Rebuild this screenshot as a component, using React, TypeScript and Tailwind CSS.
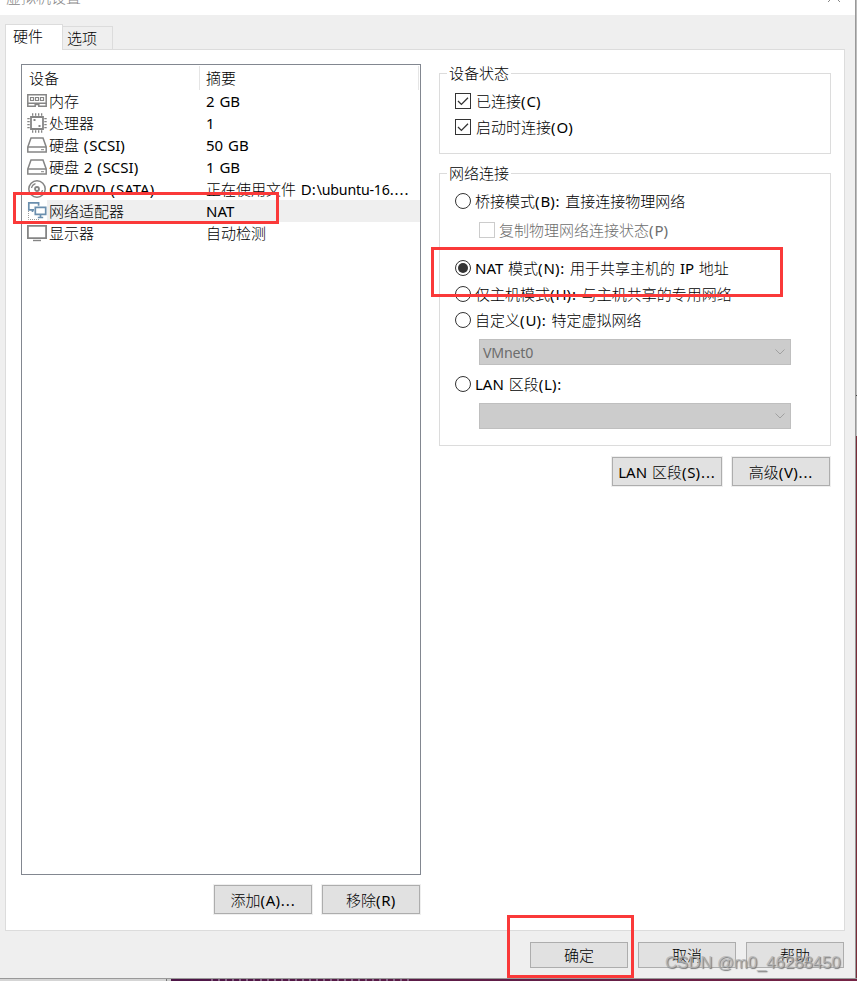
import { Fragment, type ReactNode } from 'react';
import clsx from 'clsx';

type DeviceKind = 'memory' | 'cpu' | 'disk' | 'cd' | 'network' | 'display';

interface Device {
  kind: DeviceKind;
  name: string;
  summary: string;
}

const devices: Device[] = [
  { kind: 'memory', name: '内存', summary: '2 GB' },
  { kind: 'cpu', name: '处理器', summary: '1' },
  { kind: 'disk', name: '硬盘 (SCSI)', summary: '50 GB' },
  { kind: 'disk', name: '硬盘 2 (SCSI)', summary: '1 GB' },
  { kind: 'cd', name: 'CD/DVD (SATA)', summary: '正在使用文件 D:\\ubuntu-16....' },
  { kind: 'network', name: '网络适配器', summary: 'NAT' },
  { kind: 'display', name: '显示器', summary: '自动检测' },
];

// Chinese text is light, Latin runs are regular; punctuation and spaces
// are tracked out, lowercase words are set a bit tighter
const Label = ({ text, className }: { text: string; className?: string }) => (
  <span className={clsx('whitespace-pre', className)}>
    {text.split(/([ ().:]+|[\x21-\x7e]+?(?=[ ().:]|[^\x20-\x7e]|$))/).map((part, i) => {
      if (/^[ ().:]+$/.test(part)) {
        return <span key={i} className="font-normal tracking-[0.9px]">{part}</span>;
      }
      if (i % 2 === 1) {
        return (
          <span key={i} className={clsx('font-normal', /[a-z]/.test(part) && 'text-[14.2px] tracking-[-0.2px]')}>
            {part}
          </span>
        );
      }
      return <Fragment key={i}>{part}</Fragment>;
    })}
  </span>
);

const DeviceIcon = ({ kind }: { kind: DeviceKind }) => (
  <svg width="20" height="22" viewBox="0 0 20 22" fill="none" stroke="#858585" className="shrink-0">
    {kind === 'memory' && (
      <>
        <path d="M.8 4.8h18.4v8.4H.8z" strokeWidth="1.5" />
        <path d="M3.5 7.5h3v3h-3zM8.5 7.5h3v3h-3zM13.5 7.5h3v3h-3z" strokeWidth="1.2" />
        <path d="M.8 13v3.2h7.4v-1.7h3.6v1.7h7.4V13" strokeWidth="1.5" />
      </>
    )}
    {kind === 'cpu' && (
      <>
        <path d="M4 5h12v12H4z" strokeWidth="1.8" />
        <path d="M5 2.5h11M5 19.5h11" strokeWidth="2.4" strokeDasharray="1.3 1.7" />
        <path d="M1.5 6v11M18.5 6v11" strokeWidth="2.4" strokeDasharray="1.3 1.7" />
        <path d="M6.5 8h2M11.5 14h2" strokeWidth="2" />
      </>
    )}
    {kind === 'disk' && (
      <>
        <path d="M.8 13L4 4h12l3.2 9v5H.8z" strokeWidth="1.5" />
        <path d="M1 13h18" strokeWidth="1.5" />
        <path d="M14 15.7h3" />
      </>
    )}
    {kind === 'cd' && (
      <>
        <circle cx="10" cy="11" r="8.2" strokeWidth="1.5" />
        <circle cx="10" cy="11" r="2" strokeWidth="1.8" />
        <path d="M4.5 10a5.6 5.6 0 0 1 4-4.4M15.5 12a5.6 5.6 0 0 1-4 4.4" strokeWidth="1.2" />
      </>
    )}
    {kind === 'network' && (
      <>
        <path d="M7 9.8H1.8V2.8h9.8v3M5.5 10v2" stroke="#6b8fae" strokeWidth="1.7" />
        <path d="M8.3 7.3h10.4v7H8.3z" stroke="#6b8fae" strokeWidth="1.7" />
        <path d="M13.5 14.5v3M10.8 17.5h5.4" stroke="#6b8fae" strokeWidth="1.7" />
        <path d="M1.5 11v8.5h11" stroke="#999" strokeDasharray="1 1" />
      </>
    )}
    {kind === 'display' && (
      <>
        <path d="M.9 3.9h18.2v12.2H.9z" strokeWidth="1.8" />
        <path d="M6 18.5h8" strokeWidth="1.4" />
      </>
    )}
  </svg>
);

const Button = ({ text, className }: { text: string; className?: string }) => (
  <button
    className={clsx(
      'flex items-center justify-center border border-[#adadad] bg-[#e1e1e1] ring-1 ring-[#efefef]',
      className
    )}
  >
    <Label text={text} />
  </button>
);

const Checkbox = ({ text, disabled, className }: { text: string; disabled?: boolean; className?: string }) => (
  <div className={clsx('flex h-4 items-center', disabled ? 'gap-1 text-[#6d6d6d]' : 'gap-[5px]', className)}>
    <span className={clsx('size-4 shrink-0 border bg-white', disabled ? 'border-[#ccc]' : 'border-[#333]')}>
      {!disabled && (
        <svg width="14" height="14" viewBox="0 0 14 14" fill="none" stroke="#333" strokeWidth="1.3">
          <path d="M2 7l3.4 3.4L12 3.8" />
        </svg>
      )}
    </span>
    <Label text={text} />
  </div>
);

const Radio = ({ text, checked, className }: { text: string; checked?: boolean; className?: string }) => (
  <div className={clsx('flex h-4 items-center gap-1', className)}>
    <span className="flex size-4 shrink-0 items-center justify-center rounded-full border border-[#333] bg-white">
      {checked && <span className="size-[10px] rounded-full bg-[#333]" />}
    </span>
    <Label text={text} />
  </div>
);

const Select = ({ value, className }: { value?: string; className?: string }) => (
  <div
    className={clsx(
      'ml-6 flex h-[26px] w-[312px] items-center justify-between border border-[#bfbfbf] bg-[#ccc] pr-[5px] pl-[3px] text-[#6d6d6d]',
      className
    )}
  >
    <Label text={value ?? ''} />
    <svg width="10" height="6" viewBox="0 0 10 6" fill="none" stroke="#a0a0a0">
      <path d="M.5.5L5 5 9.5.5" />
    </svg>
  </div>
);

const Group = ({ title, className, children }: { title: string; className?: string; children: ReactNode }) => (
  <section className={clsx('relative w-[392px] border border-[#dcdcdc] pl-[15px]', className)}>
    <h2 className="absolute -top-3 left-[7px] bg-white px-0.5 leading-[22px] font-light">{title}</h2>
    {children}
  </section>
);

const Highlight = ({ className }: { className: string }) => (
  <div className={clsx('pointer-events-none absolute border-[3px] border-[#fa3939]', className)} />
);

export default function App() {
  return (
    <div className="relative h-[981px] w-[857px] overflow-hidden bg-[#efefef] font-['Noto_Sans','Noto_Sans_CJK_SC',sans-serif] text-[15px] leading-[22px] font-light text-black">
      <div className="flex h-[978px]">
        <div className="flex w-[855px] flex-col">
          {/* Title bar, cut off at the top */}
          <header className="flex h-[15px] items-start justify-between overflow-hidden bg-white pr-[14px] pl-[6px] text-[#888]">
            <span className="-mt-[14px]">虚拟机设置</span>
            <svg width="14" height="14" viewBox="0 0 14 14" fill="none" stroke="#888" className="-mt-[11px]">
              <path d="M1 1l12 12M13 1L1 13" />
            </svg>
          </header>

          {/* Tabs */}
          <nav className="z-10 -mb-px ml-[5px] flex h-[35px] items-end">
            <div className="h-[26px] w-[58px] border border-b-0 border-[#dcdcdc] bg-white pl-[7px] leading-[22px]">硬件</div>
            <div className="h-6 w-[50px] border border-l-0 border-[#dcdcdc] bg-[#efefef] pl-1 leading-[22px]">选项</div>
          </nav>

          <main className="ml-[5px] flex h-[882px] w-[840px] border border-[#dcdcdc] bg-white pt-[14px] pl-[15px]">
            <div className="w-[400px]">
              <div className="h-[811px] border border-[#828790]">
                <div className="flex h-[25px] items-center">
                  <span className="w-[177px] pl-[7px]">设备</span>
                  <span className="flex h-6 w-[220px] items-center border-x border-[#e5e5e5] pl-[6px]">摘要</span>
                </div>
                {devices.map((device) => (
                  <div key={device.name} className="flex h-[22px] items-center pl-[5px]">
                    <DeviceIcon kind={device.kind} />
                    <div className={clsx('flex h-full flex-1 items-center', device.kind === 'network' && 'bg-[#efefef]')}>
                      <Label text={device.name} className="w-[159px] pl-[2px]" />
                      <Label text={device.summary} />
                    </div>
                  </div>
                ))}
              </div>
              <div className="mt-[10px] flex justify-end gap-[10px] pr-px">
                <Button text="添加(A)..." className="h-[29px] w-[98px]" />
                <Button text="移除(R)" className="h-[29px] w-[98px]" />
              </div>
            </div>

            <div className="ml-[18px] w-[392px] pt-[9px]">
              <Group title="设备状态" className="h-[81px] pt-[19px]">
                <Checkbox text="已连接(C)" />
                <Checkbox text="启动时连接(O)" className="mt-[10px]" />
              </Group>

              <Group title="网络连接" className="mt-[19px] h-[273px] pt-[19px]">
                <Radio text="桥接模式(B): 直接连接物理网络" />
                <Checkbox text="复制物理网络连接状态(P)" disabled className="mt-[13px] ml-6" />
                <Radio text="NAT 模式(N): 用于共享主机的 IP 地址" checked className="mt-[22px]" />
                <Radio text="仅主机模式(H): 与主机共享的专用网络" className="mt-[10px]" />
                <Radio text="自定义(U): 特定虚拟网络" className="mt-[10px]" />
                <Select value="VMnet0" className="mt-[11px]" />
                <Radio text="LAN 区段(L):" className="mt-[11px]" />
                <Select className="mt-[11px]" />
              </Group>

              <div className="mt-[11px] flex justify-end gap-[10px] pr-px">
                <Button text="LAN 区段(S)..." className="h-[29px] w-[110px]" />
                <Button text="高级(V)..." className="h-[29px] w-[98px]" />
              </div>
            </div>
          </main>

          <footer className="mt-[11px] flex justify-end gap-[10px] pr-[11px]">
            <Button text="确定" className="h-[26px] w-[98px]" />
            <Button text="取消" className="h-[26px] w-[98px]" />
            <Button text="帮助" className="h-[26px] w-[98px]" />
          </footer>
        </div>

        {/* Sliver of the desktop to the right of the dialog */}
        <div className="flex w-[2px] flex-col border-l border-[#999] bg-[#bdbdbd]">
          <div className="mt-[395px] h-px bg-[#444]" />
          <div className="mt-10 flex-1 bg-[#792b38]" />
        </div>
      </div>

      {/* Windows behind the bottom edge */}
      <div className="flex h-[3px] border-t border-[#999]">
        <div className="w-[166px] bg-[#d5d5d5]" />
        <div className="w-[5px] border-l border-[#777] bg-[#c9c9c9]" />
        <div className="flex-1 overflow-hidden bg-linear-to-r from-[#4d1647] to-[#752344]">
          <div className="ml-10 h-[2px] w-[200px] bg-[repeating-linear-gradient(90deg,#866083_0_2px,transparent_2px_7px)]" />
        </div>
      </div>

      <Highlight className="top-[192px] left-[13px] h-8 w-[266px]" />
      <Highlight className="top-[247px] left-[431px] h-[50px] w-[352px]" />
      <Highlight className="top-[915px] left-[507px] h-[63px] w-[127px]" />

      <div className="absolute top-[952px] left-[665px] font-['Liberation_Sans',sans-serif] text-[16.7px] font-normal whitespace-nowrap text-[#b5b5b5]/80 [text-shadow:1px_1px_1px_#777]">
        CSDN @m0_46288450
      </div>
    </div>
  );
}
